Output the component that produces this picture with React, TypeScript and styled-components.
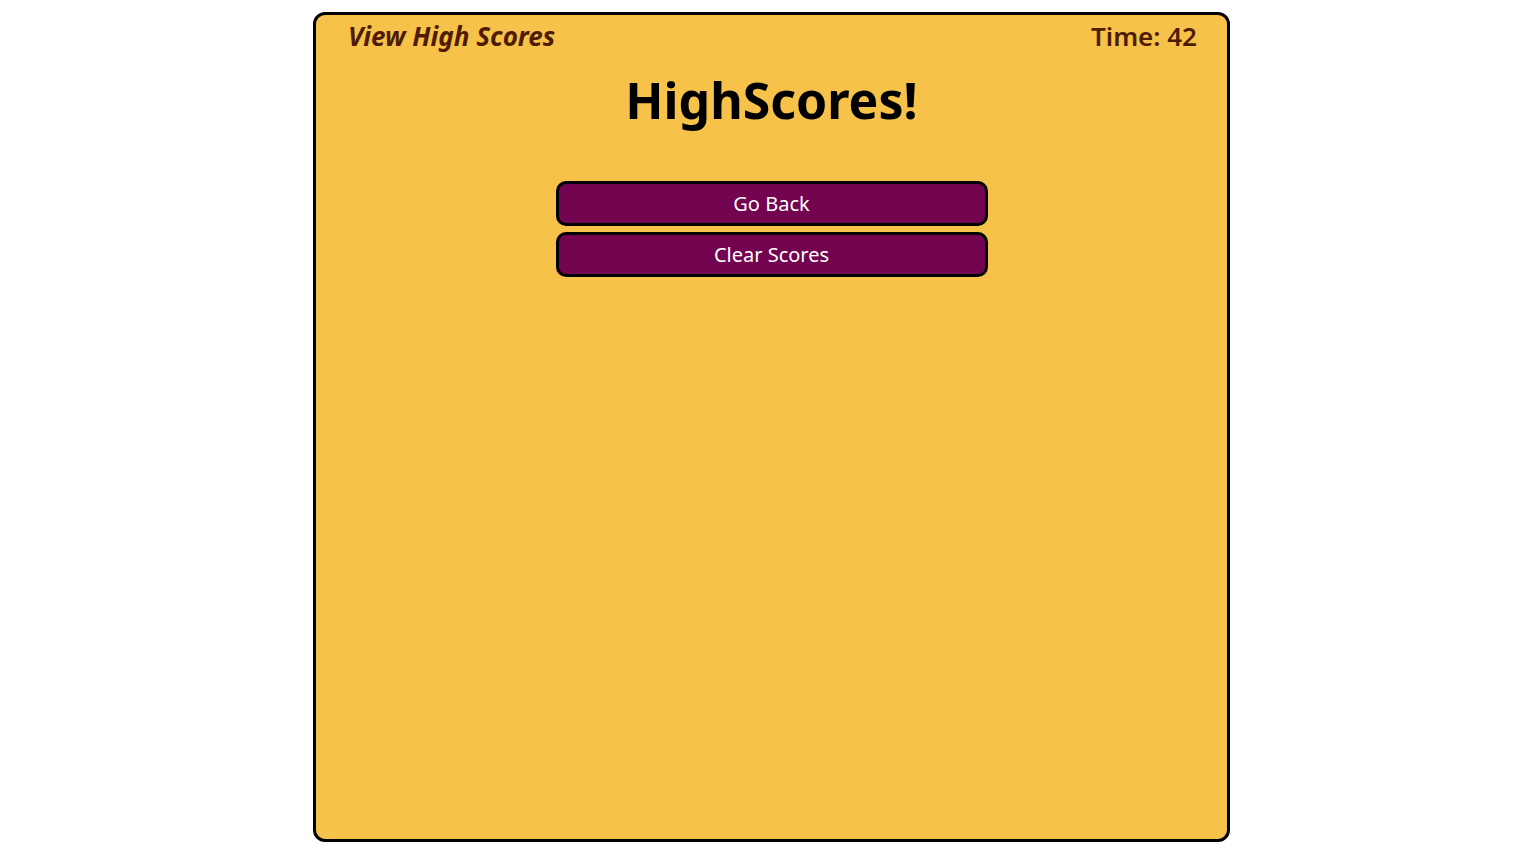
import React from "react";
import styled, { createGlobalStyle } from "styled-components";

const Global = createGlobalStyle`
  body {
    margin: 8px;
    background: #ffffff;
    font-family: "Noto Sans", "DejaVu Sans", sans-serif;
  }
`;

const Page = styled.div`
  display: flex;
  padding-left: 305px;
  padding-top: 4px;
`;

const Card = styled.main`
  box-sizing: border-box;
  width: 917px;
  height: 830px;
  background: #f7c249;
  border: 3px solid #000;
  border-radius: 12px;
  display: flex;
  flex-direction: column;
  align-items: center;
`;

const TopBar = styled.header`
  align-self: stretch;
  display: flex;
  justify-content: space-between;
  align-items: flex-start;
  padding: 5px 30px 0 32px;
`;

const HighLink = styled.a`
  font-style: italic;
  font-weight: 700;
  font-size: 26px;
  line-height: 32px;
  color: #4f1c00;
  cursor: pointer;
`;

const Timer = styled.span`
  font-weight: 600;
  font-size: 26px;
  line-height: 32px;
  color: #4f1c00;
`;

const Title = styled.h1`
  margin: 18px 0 0;
  font-size: 50px;
  font-weight: 700;
  line-height: 60px;
  color: #000;
`;

const ButtonStack = styled.div`
  display: flex;
  flex-direction: column;
  gap: 6px;
  margin-top: 51px;
`;

const Action = styled.button`
  box-sizing: border-box;
  width: 432px;
  height: 45px;
  padding: 0;
  background: #720450;
  color: #fff;
  border: 3px solid #000;
  border-radius: 10px;
  font-family: inherit;
  font-size: 20px;
  cursor: pointer;
`;

export default function App() {
  return (
    <>
      <Global />
      <Page>
        <Card>
          <TopBar>
            <HighLink>View High Scores</HighLink>
            <Timer>Time: 42</Timer>
          </TopBar>
          <Title>HighScores!</Title>
          <ButtonStack>
            <Action>Go Back</Action>
            <Action>Clear Scores</Action>
          </ButtonStack>
        </Card>
      </Page>
    </>
  );
}
